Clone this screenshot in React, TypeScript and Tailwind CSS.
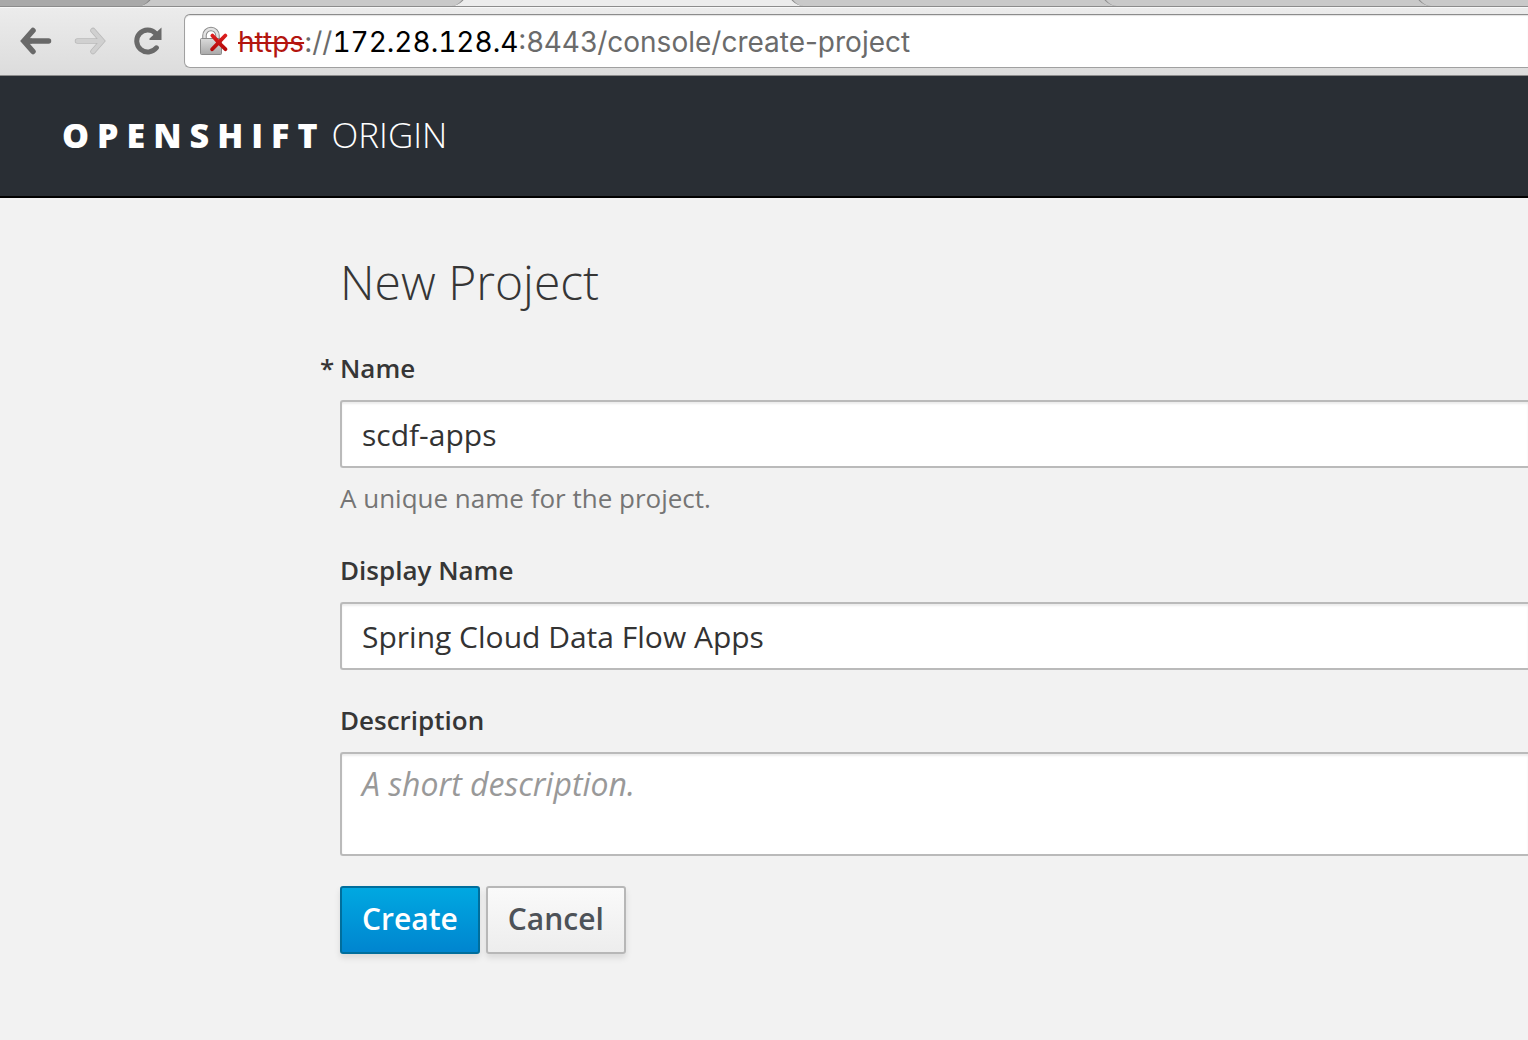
import { useState } from "react";

const field =
  "block w-full rounded-l-[3px] rounded-r-none border-2 border-r-0 border-[#bababa] bg-white px-5 text-[30px] text-[#333333] shadow-[inset_0_2px_2px_rgba(3,3,3,0.08)] outline-none";
const label = "block text-[26px] leading-9 font-semibold text-[#363636]";
const button =
  "h-[68px] rounded-[3px] border-2 px-5 pb-[2px] text-[30px] leading-10 font-semibold shadow-[0_4px_6px_rgba(3,3,3,0.1)]";

function BackIcon() {
  return (
    <svg width="32" height="28" viewBox="0 0 32 28" fill="none" stroke="currentColor" strokeWidth="5.5" strokeLinecap="round" aria-hidden="true">
      <path d="M13 3.500L3.800 14l9.200 10.500M5 14h23.500" />
      <path d="M8 11.500h4v5H8z" fill="currentColor" stroke="none" />
    </svg>
  );
}

function ForwardIcon() {
  return (
    <svg width="32" height="28" viewBox="0 0 32 28" fill="none" aria-hidden="true">
      <g strokeLinecap="round">
        <path d="M19 3.500L28.200 14l-9.200 10.500M27 14H3.500" stroke="#b9b9b9" strokeWidth="5.500" />
        <path d="M19 3.500L28.200 14l-9.200 10.500M27 14H3.500" stroke="#d0d0d0" strokeWidth="4" />
      </g>
    </svg>
  );
}

function ReloadIcon() {
  return (
    <svg width="28" height="28" viewBox="0 0 28 28" fill="none" aria-hidden="true">
      <path d="M22.400 20.800A11 11 0 1 1 21.500 6.200" stroke="currentColor" strokeWidth="5" strokeLinecap="round" />
      <path d="M27.500 0.500V13H15.500V11.500z" fill="currentColor" />
    </svg>
  );
}

function BrokenLockIcon() {
  return (
    <svg width="28" height="30" viewBox="0 0 28 30" fill="none" aria-hidden="true">
      <defs>
        <linearGradient id="lock-body" x1="0" y1="0" x2="0" y2="1">
          <stop offset="0" stopColor="#dadada" />
          <stop offset="1" stopColor="#a9a9a9" />
        </linearGradient>
        <linearGradient id="cross" x1="0" y1="0" x2="0" y2="1">
          <stop offset="0" stopColor="#e02020" />
          <stop offset="1" stopColor="#b00808" />
        </linearGradient>
      </defs>
      <path d="M4.500 13V9.500a6.500 6.500 0 0 1 13 0v3.500" stroke="#8b8b8b" strokeWidth="4.500" />
      <path d="M4.500 13V9.500a6.500 6.500 0 0 1 13 0v3.500" stroke="#e2e2e2" strokeWidth="2.500" />
      <rect x="0.500" y="12.500" width="21" height="16" rx="1" fill="url(#lock-body)" stroke="#8b8b8b" />
      <path d="M13.800 8.200L18.800 13.600 24 8.200a1.800 1.800 0 0 1 2.700 2.600L21.300 16.500l5.400 5.300a1.800 1.800 0 0 1-2.600 2.700L18.700 19.200l-5.200 5.400a1.800 1.800 0 0 1-2.700-2.600l5.300-5.500-5-5.600a1.800 1.800 0 0 1 2.700-2.700z" fill="url(#cross)" />
    </svg>
  );
}

function BrowserBar() {
  return (
    <div>
      <div className="flex h-[7px] items-end overflow-hidden border-b border-[#8c8c8c] bg-[#c9c9c9]">
        <div className="h-5 w-[154px] shrink-0 rounded-br-[16px] border-r-2 border-[#858585] bg-[#a9a9a9]" />
        <div className="h-5 w-[313px] shrink-0 bg-[#ececec]">
          <div className="h-5 rounded-br-[16px] border-r-2 border-[#8c8c8c] bg-[#c9c9c9]" />
        </div>
        <div className="h-5 w-[321px] shrink-0 bg-[#ececec]" />
        <div className="h-5 w-[313px] shrink-0 bg-[#ececec]">
          <div className="h-5 rounded-bl-[16px] border-l-2 border-[#8c8c8c] bg-[#c9c9c9]" />
        </div>
        <div className="h-5 w-[314px] shrink-0 rounded-bl-[16px] border-l-2 border-[#8c8c8c]" />
        <div className="h-5 flex-1 rounded-bl-[16px] border-l-2 border-[#8c8c8c]" />
      </div>
      <div className="flex h-[69px] items-start border-t border-b border-t-[#f8f8f8] border-b-[#8c8c8c] bg-linear-to-b from-[#ececec] to-[#dcdcdc] pt-[6px] pl-5 text-[#696969]">
        <div className="flex h-[54px] items-center">
          <button type="button" aria-label="Back"><BackIcon /></button>
          <button type="button" aria-label="Forward" className="ml-[22px]"><ForwardIcon /></button>
          <button type="button" aria-label="Reload" className="ml-7"><ReloadIcon /></button>
        </div>
        <div className="ml-[22px] flex h-[54px] flex-1 items-center rounded-l-[6px] border border-r-0 border-[#a0a0a0] border-t-[#8c8c8c] bg-white pl-[15px] shadow-[inset_0_1px_1px_rgba(0,0,0,0.12)]">
          <BrokenLockIcon />
          <a href="#create-project" className="ml-[10px] pt-[2px] font-['Inter',sans-serif] text-[28px] leading-9 whitespace-nowrap text-[#6b6b6b]">
            <span className="text-[#b3150f] line-through decoration-2">https</span>://<span className="text-black tabular-nums">172.28.128.4</span>:8443/console/create-project
          </a>
        </div>
      </div>
    </div>
  );
}

export default function App() {
  const [name, setName] = useState("scdf-apps");
  const [displayName, setDisplayName] = useState("Spring Cloud Data Flow Apps");
  const [description, setDescription] = useState("");

  return (
    <div className="min-h-screen overflow-hidden bg-[#f2f2f2] font-['Open_Sans',sans-serif] text-[#363636]">
      <BrowserBar />
      <header className="flex h-[122px] items-center border-b-2 border-black bg-[#292e34] pb-[2px] pl-[62px] text-[34px] leading-[48px] text-white">
        <a href="#home" className="whitespace-nowrap">
          <span className="font-extrabold tracking-[8px]">OPENSHIFT</span>
          <span className="ml-[6px] text-[35px] font-light">ORIGIN</span>
        </a>
      </header>
      <main className="pt-14 pl-[340px]">
        <h1 className="text-[48px] leading-[56px] font-light">New Project</h1>
        <form onSubmit={(e) => e.preventDefault()}>
          <div className="mt-10">
            <label htmlFor="name" className={`${label} -ml-5`}>
              <span className="inline-block w-5">*</span>Name
            </label>
            <input id="name" className={`${field} mt-[14px] h-[68px]`} value={name} onChange={(e) => setName(e.target.value)} aria-describedby="name-help" />
            <p id="name-help" className="mt-3 text-[26px] leading-9 text-[#757575]">A unique name for the project.</p>
          </div>
          <div className="mt-9">
            <label htmlFor="display-name" className={label}>Display Name</label>
            <input id="display-name" className={`${field} mt-[14px] h-[68px]`} value={displayName} onChange={(e) => setDisplayName(e.target.value)} />
          </div>
          <div className="mt-8">
            <label htmlFor="description" className={label}>Description</label>
            <textarea
              id="description"
              className={`${field} mt-[14px] h-[104px] resize-none pt-[10px] leading-10 placeholder:text-[32px] placeholder:text-[#999999] placeholder:italic`}
              placeholder="A short description."
              value={description}
              onChange={(e) => setDescription(e.target.value)}
            />
          </div>
          <div className="mt-[30px] flex gap-[6px]">
            <button type="submit" className={`${button} border-[#006e9c] bg-linear-to-b from-[#00a8e1] to-[#0085cf] text-white`}>Create</button>
            <button type="button" className={`${button} border-[#b7b7b7] bg-linear-to-b from-[#fafafa] to-[#ededed] text-[#4d5258]`}>Cancel</button>
          </div>
        </form>
      </main>
    </div>
  );
}
